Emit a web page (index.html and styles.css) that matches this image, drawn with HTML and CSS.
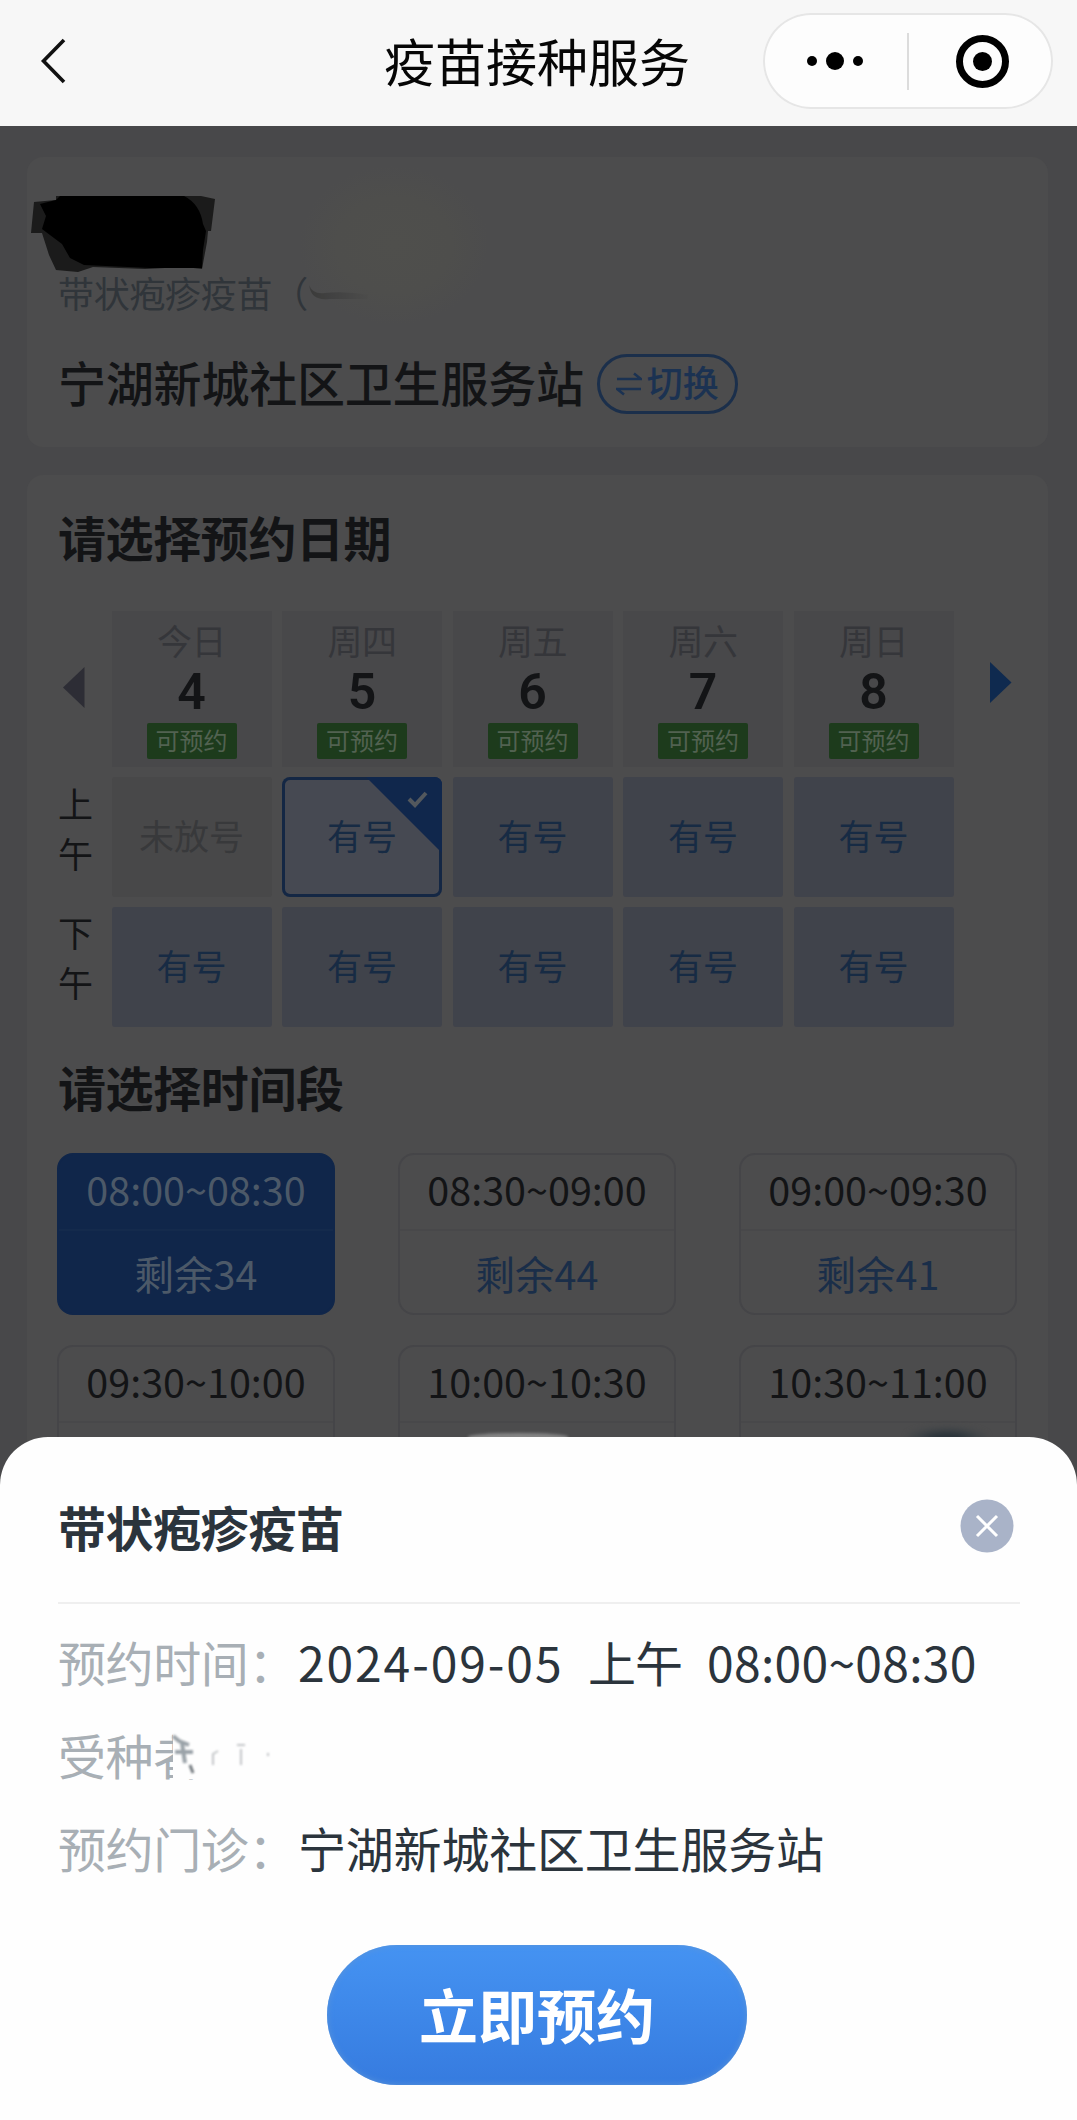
FILE: index.html
```html
<!DOCTYPE html>
<html lang="zh-CN">
<head>
<meta charset="utf-8">
<title>疫苗接种服务</title>
<link rel="stylesheet" href="styles.css">
</head>
<body>
<header class="navbar">
  <svg class="back" width="30" height="50" viewBox="0 0 30 50"><path d="M25 4 4.500 25 25 46" fill="none" stroke="#111" stroke-width="3.600"/></svg>
  <h1 class="navbar-title">疫苗接种服务</h1>
  <div class="capsule">
    <svg width="290" height="96" viewBox="0 0 290 96"><circle cx="49" cy="48" r="5"/><circle cx="72" cy="48" r="9"/><circle cx="95" cy="48" r="5"/><path d="M145 20v57" stroke="#dcdcdc" stroke-width="2"/><circle cx="219.500" cy="48.500" r="23" fill="none" stroke="#000" stroke-width="7"/><circle cx="219.500" cy="48.500" r="9.500"/></svg>
  </div>
</header>

<main class="page">
  <section class="card clinic">
    <svg class="name-mask" width="186" height="78" viewBox="30 195 186 78"><path d="M34 202 56 200V196H201L215 199 211 231H208L207 242 202 269 185 267 145 269 93 267 78 272 56 270 49 255 42 233 31 233Z" fill="#1b1b1b"/><path d="M40 204 56 200 60 196H184Q200 204 203 224L206 231 203 250 202 268H150L84 265 70 258 62 244 42 229 46 216Z" fill="#000"/></svg>
    <div class="smudge"></div>
    <p class="vaccine">带状疱疹疫苗（</p>
    <div class="clinic-row">
      <h2 class="clinic-name">宁湖新城社区卫生服务站</h2>
      <button class="switch"><svg width="26" height="24" viewBox="0 0 26 24"><path d="M1 7H25L18 1.500M25 17H1L8 22.500" fill="none" stroke="currentColor" stroke-width="2.600"/></svg>切换</button>
    </div>
  </section>

  <section class="card booking">
    <h3 class="section-title">请选择预约日期</h3>
    <div class="calendar">
      <svg class="arrow prev" width="22" height="42" viewBox="0 0 22 42"><path d="M21.500 0V41L0 20.500Z" fill="#2d2d35"/></svg>
      <div class="grid">
        <div class="day"><span>今日</span><b>4</b><em>可预约</em></div>
        <div class="day"><span>周四</span><b>5</b><em>可预约</em></div>
        <div class="day"><span>周五</span><b>6</b><em>可预约</em></div>
        <div class="day"><span>周六</span><b>7</b><em>可预约</em></div>
        <div class="day"><span>周日</span><b>8</b><em>可预约</em></div>
        <div class="cell none">未放号</div>
        <div class="cell picked">有号<svg class="corner" width="76" height="76" viewBox="0 0 76 76"><path d="M0 0H68Q76 0 76 8V76Z" fill="#10274c"/><path d="M43 22 49 28 60 16" fill="none" stroke="#53585d" stroke-width="4"/></svg></div>
        <div class="cell">有号</div>
        <div class="cell">有号</div>
        <div class="cell">有号</div>
        <div class="cell">有号</div>
        <div class="cell">有号</div>
        <div class="cell">有号</div>
        <div class="cell">有号</div>
        <div class="cell">有号</div>
      </div>
      <div class="periods"><span>上午</span><span>下午</span></div>
      <svg class="arrow next" width="22" height="42" viewBox="0 0 22 42"><path d="M0 0V41L21.500 20.500Z" fill="#0f2a4f"/></svg>
    </div>
    <h3 class="section-title times">请选择时间段</h3>
    <div class="slots">
      <div class="slot active"><span>08:00~08:30</span><span class="left">剩余34</span></div>
      <div class="slot"><span>08:30~09:00</span><span class="left">剩余44</span></div>
      <div class="slot"><span>09:00~09:30</span><span class="left">剩余41</span></div>
      <div class="slot"><span>09:30~10:00</span><span class="left"></span></div>
      <div class="slot"><span>10:00~10:30</span><span class="left"></span></div>
      <div class="slot"><span>10:30~11:00</span><span class="left"></span></div>
    </div>
  </section>
</main>

<div class="blot light"></div>
<div class="blot blue"></div>
<section class="sheet">
  <div class="sheet-head">
    <h2>带状疱疹疫苗</h2>
    <svg width="54" height="54" viewBox="0 0 54 54"><circle cx="27" cy="27" r="26.500" fill="#a9b3c8"/><path d="M17 17 37 37M37 17 17 37" stroke="#fff" stroke-width="3"/></svg>
  </div>
  <dl class="details">
    <dt>预约时间：</dt><dd><span class="date">2024-09-05</span><span class="half">上午</span><span class="time">08:00~08:30</span></dd>
    <dt class="covered">受种者<svg class="erase" width="130" height="60" viewBox="0 0 130 60"><path d="M18 0H130V60H18Z" fill="#fefefe"/><g class="traces" fill="none"><path d="M18 17 24 22 34 26M20 33 38 33M27 24 30 44" stroke="#9aa2a8" stroke-width="4"/><path d="M35 46 38 54" stroke="#70777c" stroke-width="3"/><path d="M58 46V35L63 32M82 26H90M86 30V46M113 34V37" stroke="#c3c6c8" stroke-width="2"/></g></svg></dt><dd></dd>
    <dt>预约门诊：</dt><dd class="place">宁湖新城社区卫生服务站</dd>
  </dl>
  <button class="submit">立即预约</button>
</section>
</body>
</html>
```
FILE: styles.css
```css
* { box-sizing: border-box; margin: 0; padding: 0; }
body {
  position: relative;
  width: 1077px;
  height: 2120px;
  overflow: hidden;
  background: #48484a;
  color: #131416;
  font-family: "Noto Sans CJK SC", sans-serif;
}
button { font-family: inherit; background: none; border: 0; }
h1, h2, h3 { font-weight: 500; }
svg { display: block; flex: none; }

.navbar {
  display: grid;
  grid-template-columns: 1fr 310px 1fr;
  align-items: center;
  height: 126px;
  padding: 0 24px 4px 39px;
  background: #f7f7f7;
}
.navbar-title { font-size: 51px; font-weight: 400; line-height: 60px; color: #060606; white-space: nowrap; margin: -2px 0 0 -7px; }
.capsule {
  justify-self: end;
  width: 290px;
  height: 96px;
  border-radius: 48px;
  background: #fdfdfd;
  box-shadow: inset 0 0 0 2px #e6e6e6;
}

.page { height: 1994px; padding: 31px 29px 0 27px; overflow: hidden; }
.card { background: #4c4c4d; border-radius: 16px; padding: 0 31px; }

.clinic { position: relative; height: 290px; padding-top: 113px; }
.name-mask { position: absolute; left: 3px; top: 38px; }
.smudge {
  position: absolute;
  left: 272px;
  top: 8px;
  width: 190px;
  height: 160px;
  background: radial-gradient(closest-side, #4f4f4c, #4e4e4c 60%, rgba(76, 76, 77, 0));
}
.smudge::after {
  content: "";
  position: absolute;
  left: 10px;
  top: 112px;
  width: 60px;
  height: 26px;
  background: linear-gradient(90deg, #3c3c3b, rgba(68, 68, 64, 0));
  clip-path: path("M0 8Q4 18 16 16Q36 14 60 18V22H20Q2 24 0 8Z");
  filter: blur(1px);
}
.vaccine { font-size: 36px; line-height: 44px; color: #30353a; letter-spacing: -0.3px; }
.clinic-row { display: flex; align-items: center; gap: 13px; margin-top: 40px; height: 60px; }
.clinic-name { font-size: 48px; line-height: 60px; padding-bottom: 7px; letter-spacing: -0.2px; }
.switch {
  display: flex;
  align-items: center;
  gap: 5px;
  width: 141px;
  height: 60px;
  padding: 0 0 6px 16px;
  border: 3px solid #1b2f4b;
  border-radius: 30px;
  font-size: 36px;
  line-height: 48px;
  font-weight: 500;
  color: #1b3252;
}
.switch svg { margin-top: 5px; }

.booking { height: 1700px; margin-top: 28px; padding-top: 31px; }
.section-title { font-size: 48px; line-height: 60px; font-weight: 600; letter-spacing: -0.4px; }
.calendar {
  display: grid;
  grid-template-columns: 53.500px 842px 1fr;
  margin-top: 45px;
}
.calendar .arrow { grid-row: 1; }
.prev { grid-column: 1; margin: 56px 0 0 5px; }
.next { grid-column: 3; margin: 51px 0 0 36px; }
.grid {
  grid-column: 2;
  grid-row: 1 / 3;
  display: grid;
  grid-template-columns: repeat(5, 160px);
  grid-template-rows: 156px 120px 120px;
  gap: 10px 10.5px;
}
.periods { grid-column: 1; grid-row: 1; padding-top: 167px; width: 36px; }
.periods span { display: block; height: 129px; font-size: 35px; line-height: 50px; }
.day { display: flex; flex-direction: column; align-items: center; background: #48484a; }
.day span { font-size: 35px; line-height: 44px; padding-top: 7px; color: #35363a; letter-spacing: -0.5px; }
.day b { font-family: Roboto, sans-serif; font-size: 50px; line-height: 48px; margin-top: 6px; font-weight: 600; }
.day em {
  width: 90px;
  height: 36px;
  margin-top: 7px;
  border-radius: 2px;
  background: #1d3b1c;
  color: #526251;
  font-size: 24px;
  font-style: normal;
  line-height: 33px;
  text-align: center;
}
.cell {
  position: relative;
  padding-top: 33px;
  background: #40434b;
  color: #172b44;
  font-size: 35px;
  line-height: 50px;
  text-align: center;
  border-radius: 3px;
}
.cell.none { background: #484849; color: #38393b; }
.cell.picked { background: #464952; box-shadow: inset 0 0 0 3px #142744; border-radius: 8px; }
.corner { position: absolute; top: 0; right: 0; }

.section-title.times { margin-top: 20px; }
.slots {
  display: grid;
  grid-template-columns: repeat(3, 278px);
  gap: 30px 63px;
  margin: 37px 0 0 -1px;
}
.slot {
  height: 162px;
  border: 2px solid #454548;
  border-radius: 16px;
  font-size: 39.5px;
  line-height: 68px;
  text-align: center;
}
.slot span { display: block; height: 76px; border-bottom: 2px solid #48484a; }
.slot .left { border: 0; height: 84px; padding-top: 8px; color: #1a2e49; }
.slot.active { background: #10264a; border-color: #10264a; color: #4c5968; }
.slot.active span { color: #4c5968; border-color: #142a4c; }

.blot { position: absolute; }
.blot.light { left: 468px; top: 1433px; width: 100px; height: 8px; border-radius: 50% 50% 0 0; background: #858585; filter: blur(1.500px); }
.blot.blue { left: 908px; top: 1428px; width: 78px; height: 20px; border-radius: 50% 50% 0 0; background: radial-gradient(#2a333a 25%, #424649 60%); filter: blur(3px); }

.sheet {
  position: absolute;
  left: 0;
  right: 0;
  top: 1437px;
  height: 683px;
  padding: 0 57px 0 58px;
  border-radius: 48px 48px 0 0;
  background: #fefefe;
  color: #2b343c;
}
.sheet-head {
  display: flex;
  justify-content: space-between;
  height: 167px;
  padding: 62px 6px 0 0;
  border-bottom: 2px solid #efefef;
}
.sheet-head h2 { font-size: 48px; line-height: 54px; font-weight: 600; letter-spacing: -0.4px; }
.details {
  display: grid;
  grid-template-columns: 240px 1fr;
  grid-template-rows: repeat(3, 93px);
  padding-top: 12px;
  font-size: 48px;
  line-height: 90px;
  white-space: nowrap;
}
.details dt { color: #a8afb5; letter-spacing: -0.4px; }
.details dd { display: flex; }
.date { width: 290px; letter-spacing: 1.9px; }
.half { width: 119px; letter-spacing: -1px; }
.time { letter-spacing: 0.3px; }
.place { letter-spacing: -0.2px; }
.covered { position: relative; }
.erase { position: absolute; left: 97px; top: 10px; }
.traces { filter: blur(1.200px); }
.submit {
  display: block;
  width: 420px;
  height: 140px;
  margin: 50px auto 0 269px;
  padding-bottom: 4px;
  border-radius: 70px;
  background: linear-gradient(#4593f2, #367bdf);
  box-shadow: inset 0 0 6px #5b94d8;
  color: #fff;
  font-size: 59px;
  font-weight: 700;
}
```
